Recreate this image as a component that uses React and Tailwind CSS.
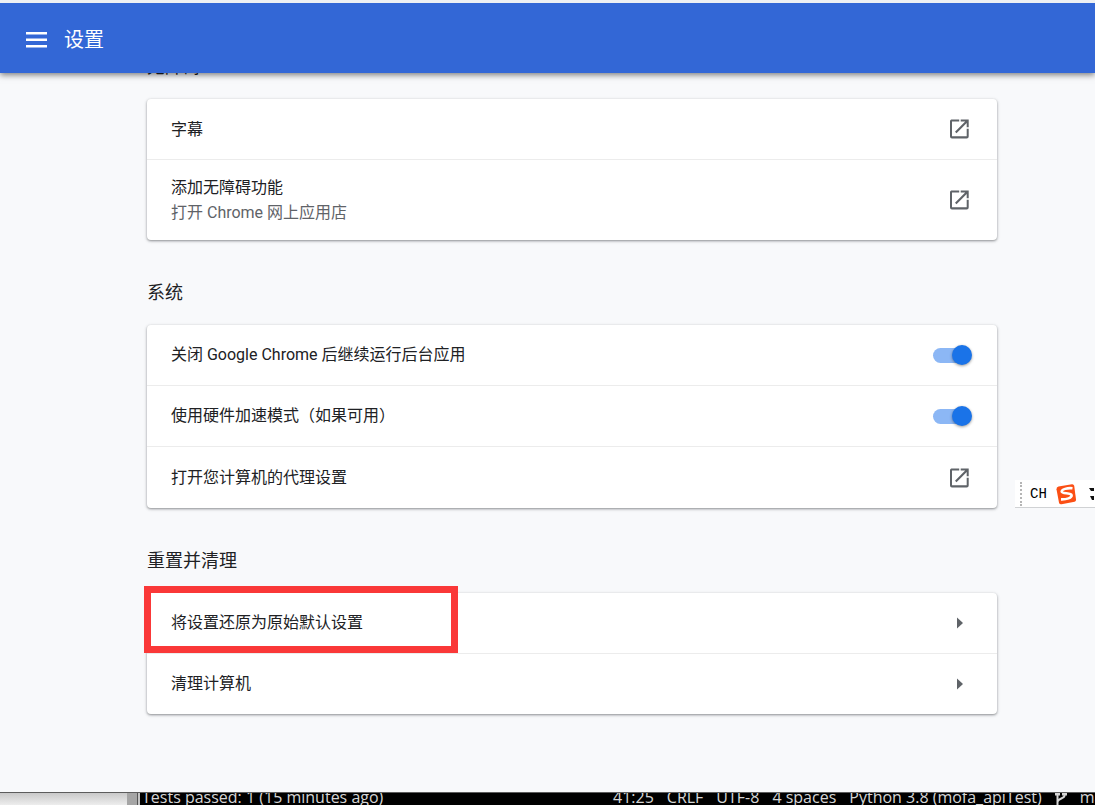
import React from "react";

function OpenIcon() {
  return (
    <svg viewBox="0 0 24 24" className="h-6 w-6 fill-[#5f6368]" aria-hidden="true">
      <path d="M4.200 2.500h8v2H5v14.700h14.700v-7.400h2v7.700a2 2 0 0 1-2 2H5a2 2 0 0 1-2-2V4.500a2 2 0 0 1 1.200-2Z" />
      <path d="M13.700 2.500h8v7.800h-2V6L9.500 16.200 8 14.700 18.200 4.500h-4.500Z" />
    </svg>
  );
}

function LinkRow({ title, sub }) {
  return (
    <a href="#open" className={sub ? "flex h-20 items-center justify-between pl-6 pr-[26px]" : "flex h-[61px] items-center justify-between pl-6 pr-[26px]"}>
      <span>
        <span className="block leading-[25px]">{title}</span>
        {sub && <span className="block leading-[25px] text-[#5f6368]">{sub}</span>}
      </span>
      <OpenIcon />
    </a>
  );
}

function ToggleRow({ id, title }) {
  return (
    <div className="flex h-[61px] items-center justify-between pl-6 pr-[29px]">
      <label htmlFor={id}>{title}</label>
      <input
        id={id}
        type="checkbox"
        role="switch"
        defaultChecked
        className="relative h-[15px] w-[35px] appearance-none rounded-full bg-[#8cb7f5] after:absolute after:-right-1 after:-top-[3px] after:h-5 after:w-5 after:rounded-full after:bg-[#1a73e8] after:shadow-[0_1px_3px_rgba(0,0,0,0.4)] after:content-['']"
      />
    </div>
  );
}

function ArrowRow({ title, marked }) {
  return (
    <div className="relative">
      <button type="button" className="flex h-15 w-full items-center justify-between pl-6 pr-[34px] text-left">
        <span>{title}</span>
        <svg viewBox="0 0 6 12" className="h-3 w-1.5 fill-[#5f6368]" aria-hidden="true">
          <path d="M0 .5 6 6 0 11.500Z" />
        </svg>
      </button>
      {marked && (
        <div className="pointer-events-none absolute -left-[3px] -top-[7px] h-[67px] w-[314px] border-7 border-[#fa3838]" />
      )}
    </div>
  );
}

function Section({ title, children }) {
  return (
    <section>
      <h2 className="mb-5 text-lg leading-[25px]">{title}</h2>
      <div className="divide-y divide-[#ececec] rounded bg-white shadow-[0_1px_2px_rgba(60,64,67,0.4),0_1px_3px_1px_rgba(60,64,67,0.16)]">
        {children}
      </div>
    </section>
  );
}

function InputMethodBar() {
  return (
    <div className="absolute right-0 top-[480px] flex h-7 w-20 items-center overflow-hidden border-b border-[#d0d2d4] bg-white">
      <span className="ml-[5px] h-6 shrink-0 border-l-2 border-dotted border-[#b5b5b5]" />
      <span className="ml-2 font-['Liberation_Mono',monospace] text-sm text-black">CH</span>
      <svg viewBox="0 0 22 22" className="ml-2 h-[22px] w-[22px] shrink-0" aria-hidden="true">
        <path d="M3.500 3.600 17 1.300Q18.700 1.100 19.200 2.800L21 16.500Q21.200 18.200 19.600 18.700L6.500 21.200Q4.600 21.500 4 19.700L1.500 6.200Q1.300 4.200 3.500 3.600Z" fill="#fb4f14" />
        <path d="M17.500 5.300C12.500 4.700 6.400 6.300 6.700 8.700c.3 2.500 9.400.7 9.900 3.500.4 2.600-5 4.400-10.600 4.200" fill="none" stroke="#fff" strokeWidth="2.600" />
      </svg>
      <svg viewBox="0 0 5 14" className="ml-3 h-3.5 w-[5px] shrink-0" aria-hidden="true">
        <path d="M0 1h5v3H2ZM1 9h4v4H3Z" fill="#111" />
      </svg>
    </div>
  );
}

function StatusBar() {
  return (
    <footer className="flex h-[13px] shrink-0 overflow-hidden border-t border-[#5c5c5c] bg-black font-['Open_Sans',sans-serif] text-base leading-2 text-[#d6d6d6]">
      <div className="w-[127px] shrink-0 bg-linear-to-b from-[#c9c9c9] to-[#ededed]" />
      <div className="w-[10px] shrink-0 bg-[#a5a5a5]" />
      <div className="w-[3px] shrink-0 border-l border-[#555] bg-[#c4c4c4]" />
      <span className="ml-[2px] flex-1 whitespace-nowrap">Tests passed: 1 (15 minutes ago)</span>
      <div className="flex w-[482px] shrink-0 gap-[13px] whitespace-nowrap">
        <span>41:25</span>
        <span>CRLF</span>
        <span>UTF-8</span>
        <span>4 spaces</span>
        <span>Python 3.8 (mofa_apiTest)</span>
        <svg viewBox="0 0 12 14" className="h-3.5 w-3 shrink-0" aria-hidden="true">
          <path d="M2.500 1v13M9.500 1v1.500C9.500 6 3 5 2.500 9" fill="none" stroke="#d6d6d6" strokeWidth="2" />
          <path d="M0 0h5v2.500H0ZM7 0h5v2.500H7Z" fill="#d6d6d6" />
        </svg>
        <span>master</span>
      </div>
    </footer>
  );
}

export default function App() {
  return (
    <div className="relative flex h-screen flex-col overflow-hidden bg-[#f8f9fb] font-[Roboto,'Noto_Sans_CJK_SC',sans-serif] text-base text-[#202124]">
      <header className="relative z-10 flex h-[73px] shrink-0 items-center border-t-3 border-[#eef0f3] bg-[#3367d6] pl-[26px] pt-[3px] text-white shadow-[0_2px_6px_rgba(0,0,0,0.5)]">
        <button type="button" aria-label="菜单" className="mr-[17px]">
          <svg viewBox="0 0 21 16" className="h-4 w-[21px]" fill="currentColor" aria-hidden="true">
            <path d="M0 0h21v2.500H0ZM0 6.500h21V9H0ZM0 13h21v2.500H0Z" />
          </svg>
        </button>
        <h1 className="text-xl">设置</h1>
      </header>
      <main className="min-h-0 flex-1 overflow-hidden">
        <div className="-mt-[19px] flex flex-col gap-10 pl-[147px] pr-[98px]">
          <Section title="无障碍">
            <LinkRow title="字幕" />
            <LinkRow title="添加无障碍功能" sub="打开 Chrome 网上应用店" />
          </Section>
          <Section title="系统">
            <ToggleRow id="background-apps" title="关闭 Google Chrome 后继续运行后台应用" />
            <ToggleRow id="hardware" title="使用硬件加速模式（如果可用）" />
            <LinkRow title="打开您计算机的代理设置" />
          </Section>
          <Section title="重置并清理">
            <ArrowRow title="将设置还原为原始默认设置" marked />
            <ArrowRow title="清理计算机" />
          </Section>
        </div>
      </main>
      <StatusBar />
      <InputMethodBar />
    </div>
  );
}
